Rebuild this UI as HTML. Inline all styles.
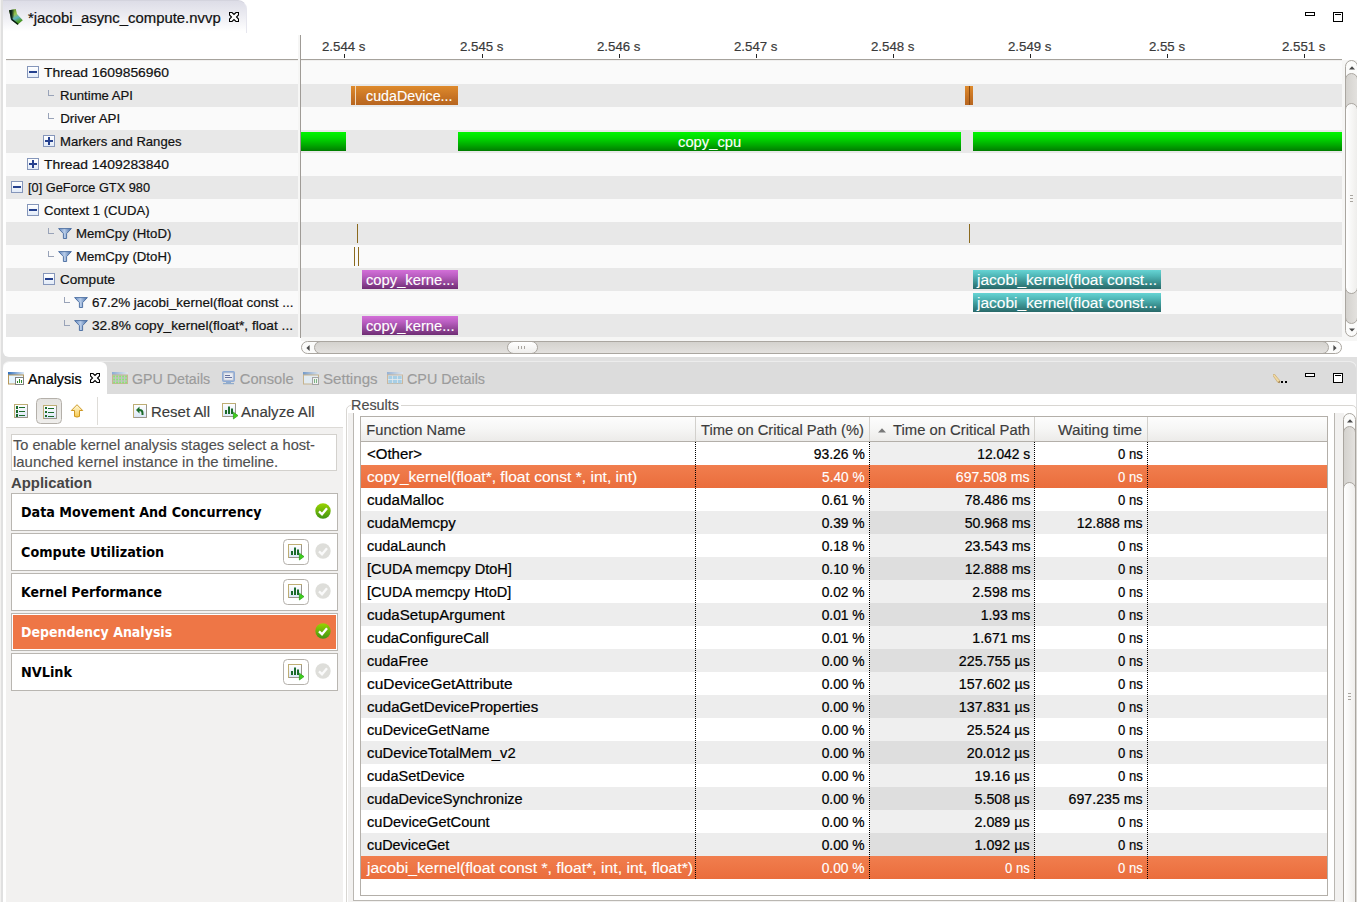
<!DOCTYPE html><html><head><meta charset="utf-8"><title>NVIDIA Visual Profiler</title><style>
html,body{margin:0;padding:0}
body{width:1357px;height:902px;overflow:hidden;background:#e0e0e0;position:relative;font-family:"Liberation Sans",sans-serif}
body>div,body>svg{position:absolute;box-sizing:border-box}
div>div,div>svg{position:absolute;box-sizing:border-box}
.t{position:absolute;white-space:pre;line-height:20px;display:block;-webkit-text-stroke:0.22px}

</style></head><body>
<div style="left:0px;top:0px;width:1px;height:902px;background:#f2f1f0"></div>
<div style="left:3px;top:-8px;width:1360px;height:365px;background:#fff;border-radius:6px"></div>
<div style="left:3px;top:0px;width:244px;height:33px;background:linear-gradient(#dddde7,#ececf2 45%,#ffffff 95%);border-radius:0 9px 0 0;border-top:1px solid #d4d4de;border-right:1px solid #e6e6ee"></div>
<div style="left:1305px;top:12px;width:10px;height:4px;border:1px solid #000"></div>
<div style="left:1333px;top:12px;width:10px;height:10px;border:1px solid #000"><div style="left:1px;top:1px;width:6px;height:1px;background:#000"></div></div>
<div style="left:301px;top:60px;width:1056px;height:281px;background:#f6f6f5"></div>
<div style="left:6px;top:61px;width:292px;height:23px;background:#fafafa"></div>
<div style="left:301px;top:61px;width:1041px;height:23px;background:#fafafa"></div>
<div style="left:27px;top:66px;width:12px;height:12px;border:1px solid #8596ba;background:linear-gradient(#ffffff,#e2ebf8)"><div style="left:1px;top:4px;width:8px;height:2px;background:#24408e"></div></div>
<div style="left:6px;top:84px;width:292px;height:23px;background:#e8e8e8"></div>
<div style="left:301px;top:84px;width:1041px;height:23px;background:#e8e8e8"></div>
<div style="left:48px;top:90px;width:6px;height:6px;border-left:1px solid #99a3b8;border-bottom:1px solid #99a3b8"></div>
<div style="left:6px;top:107px;width:292px;height:23px;background:#fafafa"></div>
<div style="left:301px;top:107px;width:1041px;height:23px;background:#fafafa"></div>
<div style="left:48px;top:113px;width:6px;height:6px;border-left:1px solid #99a3b8;border-bottom:1px solid #99a3b8"></div>
<div style="left:6px;top:130px;width:292px;height:23px;background:#e8e8e8"></div>
<div style="left:301px;top:130px;width:1041px;height:23px;background:#e8e8e8"></div>
<div style="left:43px;top:135px;width:12px;height:12px;border:1px solid #8596ba;background:linear-gradient(#ffffff,#e2ebf8)"><div style="left:1px;top:4px;width:8px;height:2px;background:#24408e"></div><div style="left:4px;top:1px;width:2px;height:8px;background:#24408e"></div></div>
<div style="left:6px;top:153px;width:292px;height:23px;background:#fafafa"></div>
<div style="left:301px;top:153px;width:1041px;height:23px;background:#fafafa"></div>
<div style="left:27px;top:158px;width:12px;height:12px;border:1px solid #8596ba;background:linear-gradient(#ffffff,#e2ebf8)"><div style="left:1px;top:4px;width:8px;height:2px;background:#24408e"></div><div style="left:4px;top:1px;width:2px;height:8px;background:#24408e"></div></div>
<div style="left:6px;top:176px;width:292px;height:23px;background:#e8e8e8"></div>
<div style="left:301px;top:176px;width:1041px;height:23px;background:#e8e8e8"></div>
<div style="left:11px;top:181px;width:12px;height:12px;border:1px solid #8596ba;background:linear-gradient(#ffffff,#e2ebf8)"><div style="left:1px;top:4px;width:8px;height:2px;background:#24408e"></div></div>
<div style="left:6px;top:199px;width:292px;height:23px;background:#fafafa"></div>
<div style="left:301px;top:199px;width:1041px;height:23px;background:#fafafa"></div>
<div style="left:27px;top:204px;width:12px;height:12px;border:1px solid #8596ba;background:linear-gradient(#ffffff,#e2ebf8)"><div style="left:1px;top:4px;width:8px;height:2px;background:#24408e"></div></div>
<div style="left:6px;top:222px;width:292px;height:23px;background:#e8e8e8"></div>
<div style="left:301px;top:222px;width:1041px;height:23px;background:#e8e8e8"></div>
<div style="left:48px;top:228px;width:6px;height:6px;border-left:1px solid #99a3b8;border-bottom:1px solid #99a3b8"></div>
<svg width="14" height="11" viewBox="0 0 14 11" style="left:58px;top:228px"><defs><linearGradient id="fg7" x1="0" x2="1"><stop offset="0" stop-color="#6288c0"/><stop offset=".45" stop-color="#b9cde9"/><stop offset="1" stop-color="#456ea8"/></linearGradient></defs><path d="M0.6 0.6 H13.4 L8.6 5.6 V10.5 H5.4 V5.6 Z" fill="url(#fg7)" stroke="#466a9e" stroke-width="0.9"/></svg>
<div style="left:6px;top:245px;width:292px;height:23px;background:#fafafa"></div>
<div style="left:301px;top:245px;width:1041px;height:23px;background:#fafafa"></div>
<div style="left:48px;top:251px;width:6px;height:6px;border-left:1px solid #99a3b8;border-bottom:1px solid #99a3b8"></div>
<svg width="14" height="11" viewBox="0 0 14 11" style="left:58px;top:251px"><defs><linearGradient id="fg8" x1="0" x2="1"><stop offset="0" stop-color="#6288c0"/><stop offset=".45" stop-color="#b9cde9"/><stop offset="1" stop-color="#456ea8"/></linearGradient></defs><path d="M0.6 0.6 H13.4 L8.6 5.6 V10.5 H5.4 V5.6 Z" fill="url(#fg8)" stroke="#466a9e" stroke-width="0.9"/></svg>
<div style="left:6px;top:268px;width:292px;height:23px;background:#e8e8e8"></div>
<div style="left:301px;top:268px;width:1041px;height:23px;background:#e8e8e8"></div>
<div style="left:43px;top:273px;width:12px;height:12px;border:1px solid #8596ba;background:linear-gradient(#ffffff,#e2ebf8)"><div style="left:1px;top:4px;width:8px;height:2px;background:#24408e"></div></div>
<div style="left:6px;top:291px;width:292px;height:23px;background:#fafafa"></div>
<div style="left:301px;top:291px;width:1041px;height:23px;background:#fafafa"></div>
<div style="left:64px;top:297px;width:6px;height:6px;border-left:1px solid #99a3b8;border-bottom:1px solid #99a3b8"></div>
<svg width="14" height="11" viewBox="0 0 14 11" style="left:74px;top:297px"><defs><linearGradient id="fg10" x1="0" x2="1"><stop offset="0" stop-color="#6288c0"/><stop offset=".45" stop-color="#b9cde9"/><stop offset="1" stop-color="#456ea8"/></linearGradient></defs><path d="M0.6 0.6 H13.4 L8.6 5.6 V10.5 H5.4 V5.6 Z" fill="url(#fg10)" stroke="#466a9e" stroke-width="0.9"/></svg>
<div style="left:6px;top:314px;width:292px;height:23px;background:#e8e8e8"></div>
<div style="left:301px;top:314px;width:1041px;height:23px;background:#e8e8e8"></div>
<div style="left:64px;top:320px;width:6px;height:6px;border-left:1px solid #99a3b8;border-bottom:1px solid #99a3b8"></div>
<svg width="14" height="11" viewBox="0 0 14 11" style="left:74px;top:320px"><defs><linearGradient id="fg11" x1="0" x2="1"><stop offset="0" stop-color="#6288c0"/><stop offset=".45" stop-color="#b9cde9"/><stop offset="1" stop-color="#456ea8"/></linearGradient></defs><path d="M0.6 0.6 H13.4 L8.6 5.6 V10.5 H5.4 V5.6 Z" fill="url(#fg11)" stroke="#466a9e" stroke-width="0.9"/></svg>
<div style="left:6px;top:59px;width:1336px;height:1px;background:#a6a29c"></div>
<div style="left:6px;top:60px;width:1336px;height:1px;background:#f0efee"></div>
<div style="left:298px;top:35px;width:2px;height:302px;background:#f6f6f5"></div>
<div style="left:300px;top:35px;width:1px;height:303px;background:#9f9b96"></div>
<div style="left:344px;top:54px;width:1px;height:4px;background:#222"></div>
<div style="left:482px;top:54px;width:1px;height:4px;background:#222"></div>
<div style="left:619px;top:54px;width:1px;height:4px;background:#222"></div>
<div style="left:756px;top:54px;width:1px;height:4px;background:#222"></div>
<div style="left:893px;top:54px;width:1px;height:4px;background:#222"></div>
<div style="left:1030px;top:54px;width:1px;height:4px;background:#222"></div>
<div style="left:1167px;top:54px;width:1px;height:4px;background:#222"></div>
<div style="left:1304px;top:54px;width:1px;height:4px;background:#222"></div>
<div style="left:351px;top:86px;width:107px;height:19px;background:linear-gradient(#de8a2c,#c87424 55%,#b7651f);"></div>
<div style="left:355px;top:86px;width:1px;height:19px;background:#f0d9bd"></div>
<div style="left:965px;top:86px;width:8px;height:19px;background:linear-gradient(#de8a2c,#c87424 55%,#b7651f);"></div>
<div style="left:968.5px;top:86px;width:1px;height:19px;background:#8a4a10"></div>
<div style="left:301px;top:132px;width:45px;height:19px;background:linear-gradient(#00f600,#00dc00 30%,#00a800 70%,#007c00);"></div>
<div style="left:458px;top:132px;width:503px;height:19px;background:linear-gradient(#00f600,#00dc00 30%,#00a800 70%,#007c00);"></div>
<div style="left:973px;top:132px;width:369px;height:19px;background:linear-gradient(#00f600,#00dc00 30%,#00a800 70%,#007c00);"></div>
<div style="left:357px;top:224px;width:1px;height:19px;background:#8b6a1e"></div>
<div style="left:969px;top:224px;width:1px;height:19px;background:#8b6a1e"></div>
<div style="left:354px;top:247px;width:1px;height:19px;background:#8b6a1e"></div>
<div style="left:358px;top:247px;width:1px;height:19px;background:#8b6a1e"></div>
<div style="left:362px;top:270px;width:96px;height:19px;background:linear-gradient(#d36fd8,#bb5fc2 30%,#96489c 65%,#6f2d74);"></div>
<div style="left:362px;top:316px;width:96px;height:19px;background:linear-gradient(#d36fd8,#bb5fc2 30%,#96489c 65%,#6f2d74);"></div>
<div style="left:973px;top:270px;width:188px;height:19px;background:linear-gradient(#66d4d4,#50b8b8 30%,#3a9090 65%,#286868);"></div>
<div style="left:973px;top:293px;width:188px;height:19px;background:linear-gradient(#66d4d4,#50b8b8 30%,#3a9090 65%,#286868);"></div>
<div style="left:1345px;top:60px;width:13px;height:277px;border:1px solid #aaa6a0;border-radius:6.5px;background:#fbfbfa"></div>
<div style="left:1345px;top:73px;width:13px;height:251px;border:1px solid #aaa6a0;border-radius:6.5px;background:linear-gradient(90deg,#d4d2ce,#e3e1de)"></div>
<div style="left:1345px;top:103px;width:13px;height:191px;border:1px solid #aaa6a0;border-radius:6.5px;background:linear-gradient(90deg,#ffffff,#efeeec)"></div>
<svg width="6" height="4" style="left:1349px;top:66px"><path d="M0 3.4 L3 0.2 L6 3.4Z" fill="#4a4a4a"/></svg>
<svg width="6" height="4" style="left:1349px;top:328px"><path d="M0 0.4 L3 3.6 L6 0.4Z" fill="#4a4a4a"/></svg>
<div style="left:1350px;top:195px;width:3px;height:1px;background:#a9a59f"></div>
<div style="left:1350px;top:198px;width:3px;height:1px;background:#a9a59f"></div>
<div style="left:1350px;top:201px;width:3px;height:1px;background:#a9a59f"></div>
<div style="left:301px;top:341px;width:1041px;height:13px;border:1px solid #aaa6a0;border-radius:6.5px;background:#fbfbfa"></div>
<div style="left:314px;top:341px;width:1015px;height:13px;border:1px solid #aaa6a0;border-radius:6.5px;background:linear-gradient(#d4d2ce,#e3e1de)"></div>
<div style="left:507px;top:341px;width:31px;height:13px;border:1px solid #aaa6a0;border-radius:6.5px;background:linear-gradient(#ffffff,#efeeec)"></div>
<svg width="4" height="6" style="left:306px;top:344.5px"><path d="M3.6 0 L0.4 3 L3.6 6Z" fill="#4a4a4a"/></svg>
<svg width="4" height="6" style="left:1333px;top:344.5px"><path d="M0.4 0 L3.6 3 L0.4 6Z" fill="#4a4a4a"/></svg>
<div style="left:518px;top:346px;width:1px;height:3px;background:#a9a59f"></div>
<div style="left:521px;top:346px;width:1px;height:3px;background:#a9a59f"></div>
<div style="left:524px;top:346px;width:1px;height:3px;background:#a9a59f"></div>
<div style="left:3px;top:361px;width:1353px;height:560px;background:#fff;border-radius:6px;border-top:1px solid #ececec"></div>
<div style="left:3px;top:362px;width:1353px;height:32px;background:#dcdcdc;border-radius:6px 6px 0 0"></div>
<div style="left:3px;top:362px;width:104px;height:33px;background:#fff;border-radius:6px 6px 0 0"></div>
<div style="left:1305px;top:373px;width:10px;height:4px;border:1px solid #000;background:#fff"></div>
<div style="left:1333px;top:373px;width:10px;height:10px;border:1px solid #000;background:#fff"><div style="left:1px;top:1px;width:6px;height:1px;background:#000"></div></div>
<div style="left:6px;top:427px;width:337px;height:1px;background:#dcdad6"></div>
<div style="left:97px;top:397px;width:1px;height:28px;background:#dedcd8"></div>
<div style="left:36px;top:398px;width:26px;height:26px;border:1px solid #b4b0aa;border-radius:4.5px;background:linear-gradient(#e5e3e0,#efeeec)"></div>
<div style="left:6px;top:428px;width:337px;height:480px;background:#f2f1f0"></div>
<div style="left:11px;top:434px;width:326px;height:37px;background:#fff;border:1px solid #d3d1cd"></div>
<div style="left:11px;top:493px;width:327px;height:38px;border:1px solid #b9b6b1;background:#fff"></div>
<div style="left:11px;top:533px;width:327px;height:38px;border:1px solid #b9b6b1;background:#fff"></div>
<div style="left:11px;top:573px;width:327px;height:38px;border:1px solid #b9b6b1;background:#fff"></div>
<div style="left:11px;top:613px;width:327px;height:38px;border:1px solid #b9b6b1;background:#fff"><div style="left:1px;top:1px;width:323px;height:34px;background:#ee7646"></div></div>
<div style="left:11px;top:653px;width:327px;height:38px;border:1px solid #b9b6b1;background:#fff"></div>
<div style="left:346px;top:405px;width:1011px;height:510px;border:1px solid #d8d6d2;border-radius:5px;background:#fff"></div>
<div style="left:351px;top:400px;width:50px;height:14px;background:#fff"></div>
<div style="left:348px;top:413px;width:996px;height:495px;background:#f2f1f0"></div>
<div style="left:353px;top:413px;width:982px;height:488px;background:#fff;border:1px solid #bab7b2;border-top:none"></div>
<div style="left:1343px;top:413px;width:13px;height:520px;border:1px solid #aaa6a0;border-radius:6.5px;background:#fbfbfa"></div>
<div style="left:1343px;top:426px;width:13px;height:520px;border:1px solid #aaa6a0;border-radius:6.5px;background:linear-gradient(90deg,#d4d2ce,#e3e1de)"></div>
<div style="left:1343px;top:482px;width:13px;height:460px;border:1px solid #aaa6a0;border-radius:6.5px;background:linear-gradient(90deg,#ffffff,#efeeec)"></div>
<svg width="6" height="4" style="left:1346.5px;top:419px"><path d="M0 3.4 L3 0.2 L6 3.4Z" fill="#4a4a4a"/></svg>
<div style="left:1348px;top:693px;width:3px;height:1px;background:#a9a59f"></div>
<div style="left:1348px;top:696px;width:3px;height:1px;background:#a9a59f"></div>
<div style="left:1348px;top:699px;width:3px;height:1px;background:#a9a59f"></div>
<div style="left:360px;top:416px;width:968px;height:480px;background:#fff;border:1px solid #b3afa9"></div>
<div style="left:361px;top:417px;width:966px;height:24px;background:linear-gradient(#fdfdfd,#f6f6f5 50%,#ecebe9)"></div>
<div style="left:361px;top:441px;width:966px;height:1px;background:#b3afa9"></div>
<div style="left:695px;top:417px;width:1px;height:24px;background:#d2d0cc"></div>
<div style="left:869px;top:417px;width:1px;height:24px;background:#d2d0cc"></div>
<div style="left:1034px;top:417px;width:1px;height:24px;background:#d2d0cc"></div>
<div style="left:1147px;top:417px;width:1px;height:24px;background:#d2d0cc"></div>
<svg width="8" height="5" style="left:878px;top:427.5px"><path d="M0 4.6 L4 0.2 L8 4.6Z" fill="#787878"/></svg>
<div style="left:870px;top:442px;width:164px;height:23px;background:#efefef"></div>
<div style="left:361px;top:465px;width:966px;height:23px;background:linear-gradient(#f17e4e,#ea6d3c)"></div>
<div style="left:870px;top:488px;width:164px;height:23px;background:#efefef"></div>
<div style="left:361px;top:511px;width:966px;height:23px;background:#ededed"></div>
<div style="left:870px;top:511px;width:164px;height:23px;background:#dedede"></div>
<div style="left:870px;top:534px;width:164px;height:23px;background:#efefef"></div>
<div style="left:361px;top:557px;width:966px;height:23px;background:#ededed"></div>
<div style="left:870px;top:557px;width:164px;height:23px;background:#dedede"></div>
<div style="left:870px;top:580px;width:164px;height:23px;background:#efefef"></div>
<div style="left:361px;top:603px;width:966px;height:23px;background:#ededed"></div>
<div style="left:870px;top:603px;width:164px;height:23px;background:#dedede"></div>
<div style="left:870px;top:626px;width:164px;height:23px;background:#efefef"></div>
<div style="left:361px;top:649px;width:966px;height:23px;background:#ededed"></div>
<div style="left:870px;top:649px;width:164px;height:23px;background:#dedede"></div>
<div style="left:870px;top:672px;width:164px;height:23px;background:#efefef"></div>
<div style="left:361px;top:695px;width:966px;height:23px;background:#ededed"></div>
<div style="left:870px;top:695px;width:164px;height:23px;background:#dedede"></div>
<div style="left:870px;top:718px;width:164px;height:23px;background:#efefef"></div>
<div style="left:361px;top:741px;width:966px;height:23px;background:#ededed"></div>
<div style="left:870px;top:741px;width:164px;height:23px;background:#dedede"></div>
<div style="left:870px;top:764px;width:164px;height:23px;background:#efefef"></div>
<div style="left:361px;top:787px;width:966px;height:23px;background:#ededed"></div>
<div style="left:870px;top:787px;width:164px;height:23px;background:#dedede"></div>
<div style="left:870px;top:810px;width:164px;height:23px;background:#efefef"></div>
<div style="left:361px;top:833px;width:966px;height:23px;background:#ededed"></div>
<div style="left:870px;top:833px;width:164px;height:23px;background:#dedede"></div>
<div style="left:361px;top:856px;width:966px;height:23px;background:linear-gradient(#f17e4e,#ea6d3c)"></div>
<div style="left:695px;top:442px;width:1px;height:437px;background:repeating-linear-gradient(#000 0 1px,transparent 1px 2px)"></div>
<div style="left:869px;top:442px;width:1px;height:437px;background:repeating-linear-gradient(#000 0 1px,transparent 1px 2px)"></div>
<div style="left:1034px;top:442px;width:1px;height:437px;background:repeating-linear-gradient(#000 0 1px,transparent 1px 2px)"></div>
<div style="left:1147px;top:442px;width:1px;height:437px;background:repeating-linear-gradient(#000 0 1px,transparent 1px 2px)"></div>
<svg width="16" height="18" viewBox="8 8 16 18" style="left:8px;top:8px"><defs><linearGradient id="nv1" x1="0.35" y1="0" x2="0.75" y2="1"><stop offset="0" stop-color="#5f8f2a"/><stop offset=".3" stop-color="#96c24e"/><stop offset=".55" stop-color="#5cb2c2"/><stop offset=".8" stop-color="#4c9c2c"/><stop offset="1" stop-color="#3f8612"/></linearGradient><linearGradient id="nv2" x1="0" y1="0" x2="1" y2="0"><stop offset="0" stop-color="#04100f"/><stop offset=".5" stop-color="#0b241e" stop-opacity=".95"/><stop offset="1" stop-color="#0b241e" stop-opacity="0"/></linearGradient></defs>
<path d="M9 10.3 L15.8 9 L17 14 L22.8 20.3 L17.5 24.8 L11 19.7 L10 14.5Z" fill="url(#nv1)"/><path d="M9 10.3 L14 9.4 L14.5 14.5 L13 18.5 L11 19.7 L10 14.5Z" fill="url(#nv2)"/><path d="M11 19.7 L17.5 24.8 L18.6 23.9 L12.2 18.8Z" fill="#06140f"/></svg>
<svg width="10" height="10" style="left:229px;top:12px"><path d="M0.5 0.5 H3 L5 2.5 L7 0.5 H9.5 V3 L7.5 5 L9.5 7 V9.5 H7 L5 7.5 L3 9.5 H0.5 V7 L2.5 5 L0.5 3Z" fill="#fff" stroke="#000" stroke-width="1.1"/></svg>
<svg width="10" height="10" style="left:90px;top:373px"><path d="M0.5 0.5 H3 L5 2.5 L7 0.5 H9.5 V3 L7.5 5 L9.5 7 V9.5 H7 L5 7.5 L3 9.5 H0.5 V7 L2.5 5 L0.5 3Z" fill="#fff" stroke="#000" stroke-width="1.1"/></svg>
<svg width="16" height="13" style="left:8px;top:372px;opacity:1"><defs><linearGradient id="wt8" x1="0" x2="1"><stop offset="0" stop-color="#2f6fbd"/><stop offset="1" stop-color="#dbe7f5"/></linearGradient></defs>
<rect x="0" y="0" width="16" height="3" fill="url(#wt8)"/><rect x="0.5" y="3" width="15" height="9" fill="#e6f5ff" stroke="#b8985a"/><rect x="7.5" y="5.5" width="8" height="7" fill="#fff" stroke="#808080"/><rect x="9" y="9" width="1" height="2" fill="#2a8a2a"/><rect x="11" y="7" width="1" height="4" fill="#2a8a2a"/><rect x="13" y="8" width="1" height="3" fill="#2a8a2a"/></svg>
<svg width="16" height="13" style="left:303px;top:372px;opacity:0.6"><defs><linearGradient id="wt303" x1="0" x2="1"><stop offset="0" stop-color="#2f6fbd"/><stop offset="1" stop-color="#dbe7f5"/></linearGradient></defs>
<rect x="0" y="0" width="16" height="3" fill="url(#wt303)"/><rect x="0.5" y="3" width="15" height="9" fill="#e6f5ff" stroke="#b8985a"/><rect x="9.5" y="5.5" width="6" height="7" fill="#fff" stroke="#808080"/><rect x="11" y="7" width="1" height="4" fill="#3f9a4a"/><rect x="13" y="7" width="1" height="4" fill="#3f9a4a"/></svg>
<svg width="16" height="12" style="left:112px;top:372px;opacity:.62"><defs><linearGradient id="gt" x1="0" x2="1"><stop offset="0" stop-color="#5b8fd0"/><stop offset="1" stop-color="#e6eef8"/></linearGradient></defs><rect width="16" height="3" fill="url(#gt)"/><rect x="0.5" y="3" width="15" height="8.5" fill="#b4b4b4" stroke="#c09a6a"/><rect x="1.2" y="3.6" width="1.8" height="1.8" fill="#55ee33"/><rect x="4.2" y="3.6" width="1.8" height="1.8" fill="#55ee33"/><rect x="7.2" y="3.6" width="1.8" height="1.8" fill="#55ee33"/><rect x="10.2" y="3.6" width="1.8" height="1.8" fill="#55ee33"/><rect x="13.2" y="3.6" width="1.8" height="1.8" fill="#55ee33"/><rect x="1.2" y="6.6" width="1.8" height="1.8" fill="#55ee33"/><rect x="4.2" y="6.6" width="1.8" height="1.8" fill="#55ee33"/><rect x="7.2" y="6.6" width="1.8" height="1.8" fill="#55ee33"/><rect x="10.2" y="6.6" width="1.8" height="1.8" fill="#55ee33"/><rect x="13.2" y="6.6" width="1.8" height="1.8" fill="#55ee33"/><rect x="1.2" y="9.6" width="1.8" height="1.8" fill="#55ee33"/><rect x="4.2" y="9.6" width="1.8" height="1.8" fill="#55ee33"/><rect x="7.2" y="9.6" width="1.8" height="1.8" fill="#55ee33"/><rect x="10.2" y="9.6" width="1.8" height="1.8" fill="#55ee33"/><rect x="13.2" y="9.6" width="1.8" height="1.8" fill="#55ee33"/></svg>
<svg width="16" height="12" style="left:387px;top:372px;opacity:.55"><rect width="16" height="3" fill="url(#gt)"/><rect x="0.5" y="3" width="15" height="8.5" fill="#f4f8fc" stroke="#c09a6a"/><rect x="1.3" y="3.8" width="4" height="3.4" fill="#7cc4ee"/><rect x="6.0" y="3.8" width="4" height="3.4" fill="#7cc4ee"/><rect x="10.700000000000001" y="3.8" width="4" height="3.4" fill="#7cc4ee"/><rect x="1.3" y="8.0" width="4" height="3.4" fill="#7cc4ee"/><rect x="6.0" y="8.0" width="4" height="3.4" fill="#7cc4ee"/><rect x="10.700000000000001" y="8.0" width="4" height="3.4" fill="#7cc4ee"/></svg>
<svg width="13" height="14" style="left:222px;top:371px;opacity:.8"><rect x="0.5" y="0.5" width="12" height="10" rx="1" fill="#7a9fd6" stroke="#7a9fd6"/><rect x="1.8" y="1.8" width="9.4" height="7.4" fill="#eef2fa" stroke="#a9b3c6" stroke-width=".8"/><rect x="3" y="4" width="5" height="1" fill="#4a5a90"/><rect x="3" y="6" width="7" height="1" fill="#4a5a90"/><rect x="4" y="11" width="5" height="1.2" fill="#7f9fc8"/><rect x="1" y="12" width="11" height="1.2" fill="#7f9fc8"/></svg>
<svg width="16" height="10" style="left:1273px;top:374px"><path d="M0.3 0.6 L1.3 0 L6.8 6.6 L6.6 8.8 L4.6 8.2 L0 1.6Z" fill="#f0d9a2" stroke="#b89455" stroke-width=".5"/><path d="M4.8 8.3 L6.6 8.8 L6.8 6.8Z" fill="#8a6a3a"/><rect x="8" y="7" width="2" height="2" fill="#000"/><rect x="12" y="7" width="2" height="2" fill="#000"/></svg>
<svg width="20" height="20" style="left:14px;top:404px"><defs><linearGradient id="pg14" x1="0" y1="0" x2="0" y2="1"><stop offset="0" stop-color="#ffffff"/><stop offset="1" stop-color="#dbe6f7"/></linearGradient></defs><rect x="0.5" y="0.5" width="13" height="13" fill="url(#pg14)" stroke="#bfae74"/><path d="M13.5 1 V13.5 H1" fill="none" stroke="#9a968c" stroke-width="1"/><rect x="2" y="2" width="2" height="3" fill="#1b6b2b"/><rect x="5" y="3" width="6" height="1" fill="#1b6b2b"/><rect x="2" y="6" width="2" height="3" fill="#1b6b2b"/><rect x="5" y="7" width="6" height="1" fill="#1b6b2b"/><rect x="2" y="10" width="2" height="3" fill="#1b6b2b"/><rect x="5" y="11" width="6" height="1" fill="#1b6b2b"/></svg>
<svg width="20" height="20" style="left:43px;top:405px"><defs><linearGradient id="pg43" x1="0" y1="0" x2="0" y2="1"><stop offset="0" stop-color="#ffffff"/><stop offset="1" stop-color="#dbe6f7"/></linearGradient></defs><rect x="0.5" y="0.5" width="13" height="13" fill="url(#pg43)" stroke="#bfae74"/><path d="M13.5 1 V13.5 H1" fill="none" stroke="#9a968c" stroke-width="1"/><rect x="2" y="2" width="2" height="2" fill="#1b6b2b"/><rect x="5" y="3" width="6" height="1" fill="#1b6b2b"/><rect x="2" y="6" width="2" height="2" fill="#1b6b2b"/><rect x="5" y="7" width="6" height="1" fill="#1b6b2b"/><rect x="2" y="10" width="2" height="2" fill="#1b6b2b"/><rect x="5" y="11" width="6" height="1" fill="#1b6b2b"/></svg>
<svg width="14" height="14" style="left:70px;top:404px"><defs><linearGradient id="ar" x1="0" y1="0" x2="0" y2="1"><stop offset="0" stop-color="#fffbe0"/><stop offset="1" stop-color="#f6c84c"/></linearGradient></defs><path d="M7 0.7 L12.7 6.5 H9.5 V12.4 Q7 13.8 4.5 12.4 V6.5 H1.3Z" fill="url(#ar)" stroke="#c98f12" stroke-width="0.9"/></svg>
<svg width="20" height="20" style="left:133px;top:404px"><defs><linearGradient id="pg133" x1="0" y1="0" x2="0" y2="1"><stop offset="0" stop-color="#ffffff"/><stop offset="1" stop-color="#dbe6f7"/></linearGradient></defs><rect x="0.5" y="0.5" width="13" height="13" fill="url(#pg133)" stroke="#bfae74"/><path d="M13.5 1 V13.5 H1" fill="none" stroke="#9a968c" stroke-width="1"/><path d="M3 6 L6.5 2.5 V5 Q10.5 5 10.5 9 V11 H8.5 V9 Q8.5 7 6.5 7 V9.5Z" fill="#1b6b2b"/></svg>
<svg width="20" height="20" style="left:222px;top:403px"><defs><linearGradient id="pg222" x1="0" y1="0" x2="0" y2="1"><stop offset="0" stop-color="#ffffff"/><stop offset="1" stop-color="#dbe6f7"/></linearGradient></defs><rect x="0.5" y="0.5" width="13" height="13" fill="url(#pg222)" stroke="#bfae74"/><path d="M13.5 1 V13.5 H1" fill="none" stroke="#9a968c" stroke-width="1"/><rect x="3" y="7" width="2" height="4" fill="#1b6b2b"/><rect x="6" y="3.5" width="2" height="7.5" fill="#1b6b2b"/><rect x="9" y="5.5" width="2" height="5.5" fill="#1b6b2b"/><path d="M11.4 9.2 L16 12.6 L11.4 16Z" fill="#3fd01c" stroke="#2a9a18" stroke-width=".7"/></svg>
<svg width="16" height="16" style="left:315px;top:503px"><defs><linearGradient id="ck0" x1="0" y1="0" x2="0" y2="1"><stop offset="0" stop-color="#9ad400"/><stop offset="1" stop-color="#3f9414"/></linearGradient></defs><circle cx="8" cy="8" r="7.7" fill="url(#ck0)"/><path d="M4 8.3 L7 11.2 L12 5.2" fill="none" stroke="#fff" stroke-width="2.3"/></svg>
<svg width="16" height="16" style="left:315px;top:543px"><circle cx="8" cy="8" r="7.7" fill="#dededa"/><path d="M4 8.3 L7 11.2 L12 5.2" fill="none" stroke="#fafafa" stroke-width="2.3"/></svg>
<div style="left:283px;top:539px;width:26px;height:26px;border:1px solid #b5b1ab;border-radius:4.5px;background:#fff"></div>
<svg width="20" height="20" style="left:288px;top:544px"><defs><linearGradient id="pg288" x1="0" y1="0" x2="0" y2="1"><stop offset="0" stop-color="#ffffff"/><stop offset="1" stop-color="#dbe6f7"/></linearGradient></defs><rect x="0.5" y="0.5" width="13" height="13" fill="url(#pg288)" stroke="#bfae74"/><path d="M13.5 1 V13.5 H1" fill="none" stroke="#9a968c" stroke-width="1"/><rect x="3" y="7" width="2" height="4" fill="#1b6b2b"/><rect x="6" y="3.5" width="2" height="7.5" fill="#1b6b2b"/><rect x="9" y="5.5" width="2" height="5.5" fill="#1b6b2b"/><path d="M11.4 9.2 L16 12.6 L11.4 16Z" fill="#3fd01c" stroke="#2a9a18" stroke-width=".7"/></svg>
<svg width="16" height="16" style="left:315px;top:583px"><circle cx="8" cy="8" r="7.7" fill="#dededa"/><path d="M4 8.3 L7 11.2 L12 5.2" fill="none" stroke="#fafafa" stroke-width="2.3"/></svg>
<div style="left:283px;top:579px;width:26px;height:26px;border:1px solid #b5b1ab;border-radius:4.5px;background:#fff"></div>
<svg width="20" height="20" style="left:288px;top:584px"><defs><linearGradient id="pg288" x1="0" y1="0" x2="0" y2="1"><stop offset="0" stop-color="#ffffff"/><stop offset="1" stop-color="#dbe6f7"/></linearGradient></defs><rect x="0.5" y="0.5" width="13" height="13" fill="url(#pg288)" stroke="#bfae74"/><path d="M13.5 1 V13.5 H1" fill="none" stroke="#9a968c" stroke-width="1"/><rect x="3" y="7" width="2" height="4" fill="#1b6b2b"/><rect x="6" y="3.5" width="2" height="7.5" fill="#1b6b2b"/><rect x="9" y="5.5" width="2" height="5.5" fill="#1b6b2b"/><path d="M11.4 9.2 L16 12.6 L11.4 16Z" fill="#3fd01c" stroke="#2a9a18" stroke-width=".7"/></svg>
<svg width="16" height="16" style="left:315px;top:623px"><defs><linearGradient id="ck3" x1="0" y1="0" x2="0" y2="1"><stop offset="0" stop-color="#9ad400"/><stop offset="1" stop-color="#3f9414"/></linearGradient></defs><circle cx="8" cy="8" r="7.7" fill="url(#ck3)"/><path d="M4 8.3 L7 11.2 L12 5.2" fill="none" stroke="#fff" stroke-width="2.3"/></svg>
<svg width="16" height="16" style="left:315px;top:663px"><circle cx="8" cy="8" r="7.7" fill="#dededa"/><path d="M4 8.3 L7 11.2 L12 5.2" fill="none" stroke="#fafafa" stroke-width="2.3"/></svg>
<div style="left:283px;top:659px;width:26px;height:26px;border:1px solid #b5b1ab;border-radius:4.5px;background:#fff"></div>
<svg width="20" height="20" style="left:288px;top:664px"><defs><linearGradient id="pg288" x1="0" y1="0" x2="0" y2="1"><stop offset="0" stop-color="#ffffff"/><stop offset="1" stop-color="#dbe6f7"/></linearGradient></defs><rect x="0.5" y="0.5" width="13" height="13" fill="url(#pg288)" stroke="#bfae74"/><path d="M13.5 1 V13.5 H1" fill="none" stroke="#9a968c" stroke-width="1"/><rect x="3" y="7" width="2" height="4" fill="#1b6b2b"/><rect x="6" y="3.5" width="2" height="7.5" fill="#1b6b2b"/><rect x="9" y="5.5" width="2" height="5.5" fill="#1b6b2b"/><path d="M11.4 9.2 L16 12.6 L11.4 16Z" fill="#3fd01c" stroke="#2a9a18" stroke-width=".7"/></svg>
<span class="t" style="top:8.12px;font-size:14.67px;color:#111;left:28.30px;transform-origin:0 50%;transform:scaleX(1.0150);">*jacobi_async_compute.nvvp</span>
<span class="t" style="top:62.88px;font-size:13.33px;color:#111;-webkit-text-stroke:0.2px;left:44.40px;transform-origin:0 50%;transform:scaleX(1.0411);">Thread 1609856960</span>
<span class="t" style="top:85.88px;font-size:13.33px;color:#111;-webkit-text-stroke:0.2px;left:60.20px;transform-origin:0 50%;transform:scaleX(0.9852);">Runtime API</span>
<span class="t" style="top:108.88px;font-size:13.33px;color:#111;-webkit-text-stroke:0.2px;left:60.20px;transform-origin:0 50%;">Driver API</span>
<span class="t" style="top:131.88px;font-size:13.33px;color:#111;-webkit-text-stroke:0.2px;left:60.20px;transform-origin:0 50%;transform:scaleX(0.9821);">Markers and Ranges</span>
<span class="t" style="top:154.88px;font-size:13.33px;color:#111;-webkit-text-stroke:0.2px;left:44.40px;transform-origin:0 50%;transform:scaleX(1.0411);">Thread 1409283840</span>
<span class="t" style="top:177.88px;font-size:13.33px;color:#111;-webkit-text-stroke:0.2px;left:28.30px;transform-origin:0 50%;transform:scaleX(0.9574);">[0] GeForce GTX 980</span>
<span class="t" style="top:200.88px;font-size:13.33px;color:#111;-webkit-text-stroke:0.2px;left:44.40px;transform-origin:0 50%;transform:scaleX(0.9823);">Context 1 (CUDA)</span>
<span class="t" style="top:223.88px;font-size:13.33px;color:#111;-webkit-text-stroke:0.2px;left:76.40px;transform-origin:0 50%;transform:scaleX(0.9900);">MemCpy (HtoD)</span>
<span class="t" style="top:246.88px;font-size:13.33px;color:#111;-webkit-text-stroke:0.2px;left:76.40px;transform-origin:0 50%;transform:scaleX(0.9900);">MemCpy (DtoH)</span>
<span class="t" style="top:269.88px;font-size:13.33px;color:#111;-webkit-text-stroke:0.2px;left:60.20px;transform-origin:0 50%;transform:scaleX(1.0168);">Compute</span>
<span class="t" style="top:292.88px;font-size:13.33px;color:#111;-webkit-text-stroke:0.2px;left:92.20px;transform-origin:0 50%;transform:scaleX(1.0073);">67.2% jacobi_kernel(float const ...</span>
<span class="t" style="top:315.88px;font-size:13.33px;color:#111;-webkit-text-stroke:0.2px;left:92.20px;transform-origin:0 50%;transform:scaleX(1.0276);">32.8% copy_kernel(float*, float ...</span>
<span class="t" style="top:36.68px;font-size:13.33px;color:#3a3a3a;-webkit-text-stroke:0.2px;left:322.45px;transform-origin:0 50%;transform:scaleX(0.9946);">2.544 s</span>
<span class="t" style="top:36.68px;font-size:13.33px;color:#3a3a3a;-webkit-text-stroke:0.2px;left:460.45px;transform-origin:0 50%;transform:scaleX(0.9946);">2.545 s</span>
<span class="t" style="top:36.68px;font-size:13.33px;color:#3a3a3a;-webkit-text-stroke:0.2px;left:597.45px;transform-origin:0 50%;transform:scaleX(0.9946);">2.546 s</span>
<span class="t" style="top:36.68px;font-size:13.33px;color:#3a3a3a;-webkit-text-stroke:0.2px;left:734.45px;transform-origin:0 50%;transform:scaleX(0.9946);">2.547 s</span>
<span class="t" style="top:36.68px;font-size:13.33px;color:#3a3a3a;-webkit-text-stroke:0.2px;left:871.45px;transform-origin:0 50%;transform:scaleX(0.9946);">2.548 s</span>
<span class="t" style="top:36.68px;font-size:13.33px;color:#3a3a3a;-webkit-text-stroke:0.2px;left:1008.45px;transform-origin:0 50%;transform:scaleX(0.9946);">2.549 s</span>
<span class="t" style="top:36.68px;font-size:13.33px;color:#3a3a3a;-webkit-text-stroke:0.2px;left:1149.20px;transform-origin:0 50%;transform:scaleX(0.9914);">2.55 s</span>
<span class="t" style="top:36.68px;font-size:13.33px;color:#3a3a3a;-webkit-text-stroke:0.2px;left:1282.45px;transform-origin:0 50%;transform:scaleX(0.9946);">2.551 s</span>
<span class="t" style="top:85.92px;font-size:14.67px;color:#fff;-webkit-text-stroke:0.12px;left:366.40px;transform-origin:0 50%;transform:scaleX(0.9741);">cudaDevice...</span>
<span class="t" style="top:131.92px;font-size:14.67px;color:#fff;-webkit-text-stroke:0.12px;left:678.30px;transform-origin:0 50%;transform:scaleX(1.0072);">copy_cpu</span>
<span class="t" style="top:269.92px;font-size:14.67px;color:#fff;-webkit-text-stroke:0.12px;left:366.30px;transform-origin:0 50%;transform:scaleX(1.0057);">copy_kerne...</span>
<span class="t" style="top:315.92px;font-size:14.67px;color:#fff;-webkit-text-stroke:0.12px;left:366.30px;transform-origin:0 50%;transform:scaleX(1.0057);">copy_kerne...</span>
<span class="t" style="top:269.92px;font-size:14.67px;color:#fff;-webkit-text-stroke:0.12px;left:976.80px;transform-origin:0 50%;transform:scaleX(1.0572);">jacobi_kernel(float const...</span>
<span class="t" style="top:292.92px;font-size:14.67px;color:#fff;-webkit-text-stroke:0.12px;left:976.80px;transform-origin:0 50%;transform:scaleX(1.0572);">jacobi_kernel(float const...</span>
<span class="t" style="top:369.12px;font-size:14.67px;color:#000;left:28.30px;transform-origin:0 50%;transform:scaleX(0.9839);">Analysis</span>
<span class="t" style="top:369.22px;font-size:14.67px;color:#9b9b9b;-webkit-text-stroke:0.15px;left:132.20px;transform-origin:0 50%;transform:scaleX(0.9697);">GPU Details</span>
<span class="t" style="top:369.22px;font-size:14.67px;color:#9b9b9b;-webkit-text-stroke:0.15px;left:239.80px;transform-origin:0 50%;">Console</span>
<span class="t" style="top:369.22px;font-size:14.67px;color:#9b9b9b;-webkit-text-stroke:0.15px;left:322.60px;transform-origin:0 50%;transform:scaleX(1.0308);">Settings</span>
<span class="t" style="top:369.22px;font-size:14.67px;color:#9b9b9b;-webkit-text-stroke:0.15px;left:406.60px;transform-origin:0 50%;transform:scaleX(0.9771);">CPU Details</span>
<span class="t" style="top:402.32px;font-size:14.67px;color:#3c3c3c;-webkit-text-stroke:0.15px;left:150.80px;transform-origin:0 50%;transform:scaleX(1.0200);">Reset All</span>
<span class="t" style="top:402.32px;font-size:14.67px;color:#3c3c3c;-webkit-text-stroke:0.15px;left:241.20px;transform-origin:0 50%;transform:scaleX(1.0265);">Analyze All</span>
<span class="t" style="top:434.92px;font-size:14.67px;color:#505050;-webkit-text-stroke:0.15px;left:13.00px;transform-origin:0 50%;transform:scaleX(0.9964);">To enable kernel analysis stages select a host-</span>
<span class="t" style="top:452.22px;font-size:14.67px;color:#505050;-webkit-text-stroke:0.15px;left:13.00px;transform-origin:0 50%;transform:scaleX(1.0172);">launched kernel instance in the timeline.</span>
<span class="t" style="top:472.92px;font-size:14.67px;color:#454545;font-weight:bold;-webkit-text-stroke:0;left:11.30px;transform-origin:0 50%;transform:scaleX(1.0151);">Application</span>
<span class="t" style="top:503.39px;font-size:13.33px;color:#000;font-weight:bold;-webkit-text-stroke:0;font-family:'DejaVu Sans', 'Liberation Sans', sans-serif;-webkit-text-stroke:0;left:21.20px;transform-origin:0 50%;transform:scaleX(0.9559);">Data Movement And Concurrency</span>
<span class="t" style="top:543.39px;font-size:13.33px;color:#000;font-weight:bold;-webkit-text-stroke:0;font-family:'DejaVu Sans', 'Liberation Sans', sans-serif;-webkit-text-stroke:0;left:21.20px;transform-origin:0 50%;transform:scaleX(0.9601);">Compute Utilization</span>
<span class="t" style="top:583.39px;font-size:13.33px;color:#000;font-weight:bold;-webkit-text-stroke:0;font-family:'DejaVu Sans', 'Liberation Sans', sans-serif;-webkit-text-stroke:0;left:21.20px;transform-origin:0 50%;transform:scaleX(0.9414);">Kernel Performance</span>
<span class="t" style="top:623.39px;font-size:13.33px;color:#fff;font-weight:bold;-webkit-text-stroke:0.12px;font-family:'DejaVu Sans', 'Liberation Sans', sans-serif;-webkit-text-stroke:0;left:21.20px;transform-origin:0 50%;transform:scaleX(0.9452);">Dependency Analysis</span>
<span class="t" style="top:663.39px;font-size:13.33px;color:#000;font-weight:bold;-webkit-text-stroke:0;font-family:'DejaVu Sans', 'Liberation Sans', sans-serif;-webkit-text-stroke:0;left:21.20px;transform-origin:0 50%;transform:scaleX(0.9661);">NVLink</span>
<span class="t" style="top:394.62px;font-size:14.67px;color:#4c4c4c;-webkit-text-stroke:0.15px;left:350.80px;transform-origin:0 50%;transform:scaleX(0.9821);">Results</span>
<span class="t" style="top:419.92px;font-size:14.67px;color:#3c3c3c;-webkit-text-stroke:0.15px;left:366.30px;transform-origin:0 50%;">Function Name</span>
<span class="t" style="top:419.92px;font-size:14.67px;color:#3c3c3c;-webkit-text-stroke:0.15px;left:701.30px;transform-origin:0 50%;transform:scaleX(1.0040);">Time on Critical Path (%)</span>
<span class="t" style="top:419.92px;font-size:14.67px;color:#3c3c3c;-webkit-text-stroke:0.15px;left:892.50px;transform-origin:0 50%;transform:scaleX(1.0112);">Time on Critical Path</span>
<span class="t" style="top:419.92px;font-size:14.67px;color:#3c3c3c;-webkit-text-stroke:0.15px;left:1057.70px;transform-origin:0 50%;transform:scaleX(1.0488);">Waiting time</span>
<span class="t" style="top:444.22px;font-size:14.67px;color:#000;left:366.70px;transform-origin:0 50%;transform:scaleX(1.0227);">&lt;Other&gt;</span>
<span class="t" style="top:444.22px;font-size:14.67px;color:#000;right:492.20px;transform-origin:100% 50%;transform:scaleX(0.9483);">93.26 %</span>
<span class="t" style="top:444.22px;font-size:14.67px;color:#000;right:327.00px;transform-origin:100% 50%;transform:scaleX(0.9425);">12.042 s</span>
<span class="t" style="top:444.22px;font-size:14.67px;color:#000;right:214.20px;transform-origin:100% 50%;transform:scaleX(0.8916);">0 ns</span>
<span class="t" style="top:467.22px;font-size:14.67px;color:#fff;-webkit-text-stroke:0.12px;left:366.70px;transform-origin:0 50%;transform:scaleX(1.0631);">copy_kernel(float*, float const *, int, int)</span>
<span class="t" style="top:467.22px;font-size:14.67px;color:#fff;-webkit-text-stroke:0.12px;right:492.20px;transform-origin:100% 50%;transform:scaleX(0.9334);">5.40 %</span>
<span class="t" style="top:467.22px;font-size:14.67px;color:#fff;-webkit-text-stroke:0.12px;right:327.00px;transform-origin:100% 50%;transform:scaleX(0.9635);">697.508 ms</span>
<span class="t" style="top:467.22px;font-size:14.67px;color:#fff;-webkit-text-stroke:0.12px;right:214.20px;transform-origin:100% 50%;transform:scaleX(0.8916);">0 ns</span>
<span class="t" style="top:490.22px;font-size:14.67px;color:#000;left:366.70px;transform-origin:0 50%;transform:scaleX(1.0359);">cudaMalloc</span>
<span class="t" style="top:490.22px;font-size:14.67px;color:#000;right:492.20px;transform-origin:100% 50%;transform:scaleX(0.9421);">0.61 %</span>
<span class="t" style="top:490.22px;font-size:14.67px;color:#000;right:327.00px;transform-origin:100% 50%;transform:scaleX(0.9615);">78.486 ms</span>
<span class="t" style="top:490.22px;font-size:14.67px;color:#000;right:214.20px;transform-origin:100% 50%;transform:scaleX(0.8916);">0 ns</span>
<span class="t" style="top:513.22px;font-size:14.67px;color:#000;left:366.70px;transform-origin:0 50%;transform:scaleX(1.0187);">cudaMemcpy</span>
<span class="t" style="top:513.22px;font-size:14.67px;color:#000;right:492.20px;transform-origin:100% 50%;transform:scaleX(0.9421);">0.39 %</span>
<span class="t" style="top:513.22px;font-size:14.67px;color:#000;right:327.00px;transform-origin:100% 50%;transform:scaleX(0.9615);">50.968 ms</span>
<span class="t" style="top:513.22px;font-size:14.67px;color:#000;right:214.20px;transform-origin:100% 50%;transform:scaleX(0.9615);">12.888 ms</span>
<span class="t" style="top:536.22px;font-size:14.67px;color:#000;left:366.70px;transform-origin:0 50%;transform:scaleX(0.9865);">cudaLaunch</span>
<span class="t" style="top:536.22px;font-size:14.67px;color:#000;right:492.20px;transform-origin:100% 50%;transform:scaleX(0.9421);">0.18 %</span>
<span class="t" style="top:536.22px;font-size:14.67px;color:#000;right:327.00px;transform-origin:100% 50%;transform:scaleX(0.9615);">23.543 ms</span>
<span class="t" style="top:536.22px;font-size:14.67px;color:#000;right:214.20px;transform-origin:100% 50%;transform:scaleX(0.8916);">0 ns</span>
<span class="t" style="top:559.22px;font-size:14.67px;color:#000;left:366.70px;transform-origin:0 50%;transform:scaleX(0.9940);">[CUDA memcpy DtoH]</span>
<span class="t" style="top:559.22px;font-size:14.67px;color:#000;right:492.20px;transform-origin:100% 50%;transform:scaleX(0.9421);">0.10 %</span>
<span class="t" style="top:559.22px;font-size:14.67px;color:#000;right:327.00px;transform-origin:100% 50%;transform:scaleX(0.9615);">12.888 ms</span>
<span class="t" style="top:559.22px;font-size:14.67px;color:#000;right:214.20px;transform-origin:100% 50%;transform:scaleX(0.8916);">0 ns</span>
<span class="t" style="top:582.22px;font-size:14.67px;color:#000;left:366.70px;transform-origin:0 50%;transform:scaleX(0.9892);">[CUDA memcpy HtoD]</span>
<span class="t" style="top:582.22px;font-size:14.67px;color:#000;right:492.20px;transform-origin:100% 50%;transform:scaleX(0.9421);">0.02 %</span>
<span class="t" style="top:582.22px;font-size:14.67px;color:#000;right:327.00px;transform-origin:100% 50%;transform:scaleX(0.9619);">2.598 ms</span>
<span class="t" style="top:582.22px;font-size:14.67px;color:#000;right:214.20px;transform-origin:100% 50%;transform:scaleX(0.8916);">0 ns</span>
<span class="t" style="top:605.22px;font-size:14.67px;color:#000;left:366.70px;transform-origin:0 50%;transform:scaleX(1.0305);">cudaSetupArgument</span>
<span class="t" style="top:605.22px;font-size:14.67px;color:#000;right:492.20px;transform-origin:100% 50%;transform:scaleX(0.9421);">0.01 %</span>
<span class="t" style="top:605.22px;font-size:14.67px;color:#000;right:327.00px;transform-origin:100% 50%;transform:scaleX(0.9494);">1.93 ms</span>
<span class="t" style="top:605.22px;font-size:14.67px;color:#000;right:214.20px;transform-origin:100% 50%;transform:scaleX(0.8916);">0 ns</span>
<span class="t" style="top:628.22px;font-size:14.67px;color:#000;left:366.70px;transform-origin:0 50%;transform:scaleX(1.0101);">cudaConfigureCall</span>
<span class="t" style="top:628.22px;font-size:14.67px;color:#000;right:492.20px;transform-origin:100% 50%;transform:scaleX(0.9421);">0.01 %</span>
<span class="t" style="top:628.22px;font-size:14.67px;color:#000;right:327.00px;transform-origin:100% 50%;transform:scaleX(0.9619);">1.671 ms</span>
<span class="t" style="top:628.22px;font-size:14.67px;color:#000;right:214.20px;transform-origin:100% 50%;transform:scaleX(0.8916);">0 ns</span>
<span class="t" style="top:651.22px;font-size:14.67px;color:#000;left:366.70px;transform-origin:0 50%;transform:scaleX(0.9883);">cudaFree</span>
<span class="t" style="top:651.22px;font-size:14.67px;color:#000;right:492.20px;transform-origin:100% 50%;transform:scaleX(0.9421);">0.00 %</span>
<span class="t" style="top:651.22px;font-size:14.67px;color:#000;right:327.00px;transform-origin:100% 50%;transform:scaleX(0.9749);">225.755 µs</span>
<span class="t" style="top:651.22px;font-size:14.67px;color:#000;right:214.20px;transform-origin:100% 50%;transform:scaleX(0.8916);">0 ns</span>
<span class="t" style="top:674.22px;font-size:14.67px;color:#000;left:366.70px;transform-origin:0 50%;transform:scaleX(1.0521);">cuDeviceGetAttribute</span>
<span class="t" style="top:674.22px;font-size:14.67px;color:#000;right:492.20px;transform-origin:100% 50%;transform:scaleX(0.9421);">0.00 %</span>
<span class="t" style="top:674.22px;font-size:14.67px;color:#000;right:327.00px;transform-origin:100% 50%;transform:scaleX(0.9749);">157.602 µs</span>
<span class="t" style="top:674.22px;font-size:14.67px;color:#000;right:214.20px;transform-origin:100% 50%;transform:scaleX(0.8916);">0 ns</span>
<span class="t" style="top:697.22px;font-size:14.67px;color:#000;left:366.70px;transform-origin:0 50%;transform:scaleX(1.0251);">cudaGetDeviceProperties</span>
<span class="t" style="top:697.22px;font-size:14.67px;color:#000;right:492.20px;transform-origin:100% 50%;transform:scaleX(0.9421);">0.00 %</span>
<span class="t" style="top:697.22px;font-size:14.67px;color:#000;right:327.00px;transform-origin:100% 50%;transform:scaleX(0.9749);">137.831 µs</span>
<span class="t" style="top:697.22px;font-size:14.67px;color:#000;right:214.20px;transform-origin:100% 50%;transform:scaleX(0.8916);">0 ns</span>
<span class="t" style="top:720.22px;font-size:14.67px;color:#000;left:366.70px;transform-origin:0 50%;transform:scaleX(0.9967);">cuDeviceGetName</span>
<span class="t" style="top:720.22px;font-size:14.67px;color:#000;right:492.20px;transform-origin:100% 50%;transform:scaleX(0.9421);">0.00 %</span>
<span class="t" style="top:720.22px;font-size:14.67px;color:#000;right:327.00px;transform-origin:100% 50%;transform:scaleX(0.9739);">25.524 µs</span>
<span class="t" style="top:720.22px;font-size:14.67px;color:#000;right:214.20px;transform-origin:100% 50%;transform:scaleX(0.8916);">0 ns</span>
<span class="t" style="top:743.22px;font-size:14.67px;color:#000;left:366.70px;transform-origin:0 50%;transform:scaleX(1.0086);">cuDeviceTotalMem_v2</span>
<span class="t" style="top:743.22px;font-size:14.67px;color:#000;right:492.20px;transform-origin:100% 50%;transform:scaleX(0.9421);">0.00 %</span>
<span class="t" style="top:743.22px;font-size:14.67px;color:#000;right:327.00px;transform-origin:100% 50%;transform:scaleX(0.9739);">20.012 µs</span>
<span class="t" style="top:743.22px;font-size:14.67px;color:#000;right:214.20px;transform-origin:100% 50%;transform:scaleX(0.8916);">0 ns</span>
<span class="t" style="top:766.22px;font-size:14.67px;color:#000;left:366.70px;transform-origin:0 50%;transform:scaleX(0.9899);">cudaSetDevice</span>
<span class="t" style="top:766.22px;font-size:14.67px;color:#000;right:492.20px;transform-origin:100% 50%;transform:scaleX(0.9421);">0.00 %</span>
<span class="t" style="top:766.22px;font-size:14.67px;color:#000;right:327.00px;transform-origin:100% 50%;transform:scaleX(0.9729);">19.16 µs</span>
<span class="t" style="top:766.22px;font-size:14.67px;color:#000;right:214.20px;transform-origin:100% 50%;transform:scaleX(0.8916);">0 ns</span>
<span class="t" style="top:789.22px;font-size:14.67px;color:#000;left:366.70px;transform-origin:0 50%;transform:scaleX(0.9902);">cudaDeviceSynchronize</span>
<span class="t" style="top:789.22px;font-size:14.67px;color:#000;right:492.20px;transform-origin:100% 50%;transform:scaleX(0.9421);">0.00 %</span>
<span class="t" style="top:789.22px;font-size:14.67px;color:#000;right:327.00px;transform-origin:100% 50%;transform:scaleX(0.9729);">5.508 µs</span>
<span class="t" style="top:789.22px;font-size:14.67px;color:#000;right:214.20px;transform-origin:100% 50%;transform:scaleX(0.9661);">697.235 ms</span>
<span class="t" style="top:812.22px;font-size:14.67px;color:#000;left:366.70px;transform-origin:0 50%;transform:scaleX(0.9966);">cuDeviceGetCount</span>
<span class="t" style="top:812.22px;font-size:14.67px;color:#000;right:492.20px;transform-origin:100% 50%;transform:scaleX(0.9421);">0.00 %</span>
<span class="t" style="top:812.22px;font-size:14.67px;color:#000;right:327.00px;transform-origin:100% 50%;transform:scaleX(0.9729);">2.089 µs</span>
<span class="t" style="top:812.22px;font-size:14.67px;color:#000;right:214.20px;transform-origin:100% 50%;transform:scaleX(0.8916);">0 ns</span>
<span class="t" style="top:835.22px;font-size:14.67px;color:#000;left:366.70px;transform-origin:0 50%;transform:scaleX(0.9809);">cuDeviceGet</span>
<span class="t" style="top:835.22px;font-size:14.67px;color:#000;right:492.20px;transform-origin:100% 50%;transform:scaleX(0.9421);">0.00 %</span>
<span class="t" style="top:835.22px;font-size:14.67px;color:#000;right:327.00px;transform-origin:100% 50%;transform:scaleX(0.9729);">1.092 µs</span>
<span class="t" style="top:835.22px;font-size:14.67px;color:#000;right:214.20px;transform-origin:100% 50%;transform:scaleX(0.8916);">0 ns</span>
<span class="t" style="top:858.22px;font-size:14.67px;color:#fff;-webkit-text-stroke:0.12px;left:366.70px;transform-origin:0 50%;transform:scaleX(1.0760);">jacobi_kernel(float const *, float*, int, int, float*)</span>
<span class="t" style="top:858.22px;font-size:14.67px;color:#fff;-webkit-text-stroke:0.12px;right:492.20px;transform-origin:100% 50%;transform:scaleX(0.9421);">0.00 %</span>
<span class="t" style="top:858.22px;font-size:14.67px;color:#fff;-webkit-text-stroke:0.12px;right:327.00px;transform-origin:100% 50%;transform:scaleX(0.8916);">0 ns</span>
<span class="t" style="top:858.22px;font-size:14.67px;color:#fff;-webkit-text-stroke:0.12px;right:214.20px;transform-origin:100% 50%;transform:scaleX(0.8916);">0 ns</span>
</body></html>
